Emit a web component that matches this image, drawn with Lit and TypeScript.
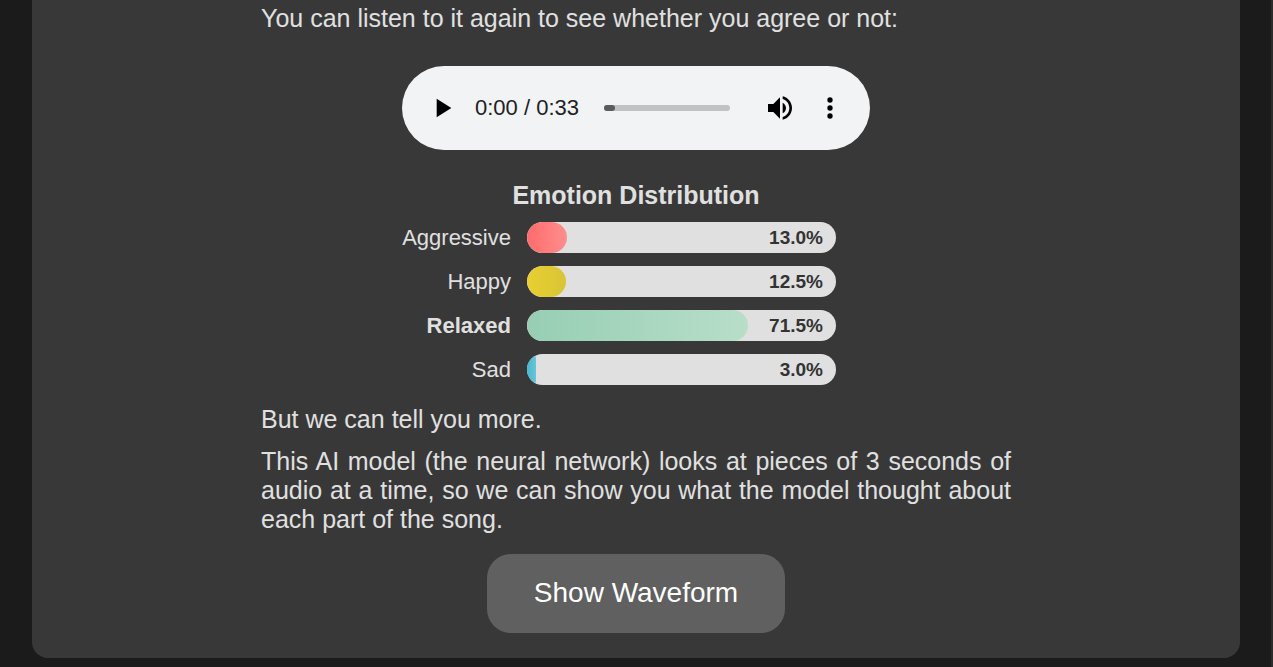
import { LitElement, html, css } from "lit";
import { customElement, property, state } from "lit/decorators.js";
import { classMap } from "lit/directives/class-map.js";
import { styleMap } from "lit/directives/style-map.js";

interface Emotion {
  name: string;
  value: number;
  from: string;
  to: string;
}

@customElement("audio-player")
class AudioPlayer extends LitElement {
  static styles = css`
    :host {
      display: block;
    }
    .player {
      display: flex;
      align-items: center;
      box-sizing: border-box;
      width: 468px;
      max-width: 100%;
      height: 84px;
      padding: 0 15px;
      border-radius: 42px;
      background: #f1f3f4;
      color: #202124;
    }
    .icon {
      display: grid;
      place-items: center;
      flex: none;
      width: 50px;
      height: 50px;
      padding: 0;
      border: 0;
      background: none;
      color: #000;
    }
    .icon svg {
      display: block;
      width: 32px;
      height: 32px;
      fill: currentColor;
    }
    .time {
      flex: none;
      margin-left: 8px;
      font-size: 22px;
      line-height: 28px;
      white-space: nowrap;
    }
    .seek {
      appearance: none;
      flex: 1;
      min-width: 0;
      height: 6px;
      margin: 0 25px;
      border-radius: 3px;
      background: #c1c2c3;
    }
    .seek::-webkit-slider-thumb {
      appearance: none;
      width: 11px;
      height: 6px;
      border-radius: 3px;
      background: #5a5b5c;
    }
  `;

  render() {
    return html`
      <div class="player" role="group" aria-label="Audio player">
        <button class="icon" aria-label="Play">
          <svg viewBox="0 0 24 24"><path d="M8 5v14l11-7z" /></svg>
        </button>
        <span class="time">0:00 / 0:33</span>
        <input class="seek" type="range" min="0" max="33" value="0" aria-label="Seek" />
        <button class="icon" aria-label="Mute">
          <svg viewBox="0 0 24 24">
            <path
              d="M3 9v6h4l5 5V4L7 9H3zm13.5 3c0-1.77-1.02-3.29-2.5-4.03v8.05c1.48-.73 2.5-2.25 2.5-4.02zM14 3.23v2.06c2.89.86 5 3.54 5 6.71s-2.11 5.85-5 6.71v2.06c4.01-.91 7-4.49 7-8.77s-2.99-7.86-7-8.77z"
            />
          </svg>
        </button>
        <button class="icon" aria-label="More options">
          <svg viewBox="0 0 24 24">
            <circle cx="12" cy="6" r="2" />
            <circle cx="12" cy="12" r="2" />
            <circle cx="12" cy="18" r="2" />
          </svg>
        </button>
      </div>
    `;
  }
}

@customElement("emotion-chart")
class EmotionChart extends LitElement {
  static styles = css`
    :host {
      display: block;
    }
    .title {
      margin: 0 0 12px;
      font-size: 25px;
      line-height: 29px;
      font-weight: 700;
      text-align: center;
    }
    .rows {
      display: grid;
      gap: 13px;
      margin: 0;
      padding: 0;
      list-style: none;
    }
    .row {
      display: grid;
      grid-template-columns: 109px 309px;
      column-gap: 16px;
      align-items: center;
      justify-content: center;
      padding-right: 34px;
    }
    .label {
      font-size: 22px;
      line-height: 30px;
      text-align: right;
    }
    .top .label {
      font-weight: 700;
    }
    .track {
      display: grid;
      align-items: center;
      height: 31px;
      border-radius: 16px;
      background: #e0e0e0;
      overflow: hidden;
    }
    .fill,
    .value {
      grid-area: 1 / 1;
    }
    .fill {
      height: 100%;
      border-radius: 16px;
    }
    .value {
      padding-right: 13px;
      color: #333;
      font-size: 19px;
      line-height: 30px;
      font-weight: 700;
      text-align: right;
    }
  `;

  @property({ attribute: false }) emotions: Emotion[] = [];

  render() {
    const highest = Math.max(...this.emotions.map((e) => e.value));
    return html`
      <h3 class="title">Emotion Distribution</h3>
      <ul class="rows">
        ${this.emotions.map(
          (e) => html`
            <li class=${classMap({ row: true, top: e.value === highest })}>
              <span class="label">${e.name}</span>
              <div class="track">
                <div
                  class="fill"
                  style=${styleMap({
                    width: `${e.value}%`,
                    background: `linear-gradient(90deg, ${e.from}, ${e.to})`,
                  })}
                ></div>
                <span class="value">${e.value.toFixed(1)}%</span>
              </div>
            </li>
          `
        )}
      </ul>
    `;
  }
}

@customElement("app-root")
class AppRoot extends LitElement {
  static styles = css`
    :host {
      display: block;
      box-sizing: border-box;
      min-height: 100vh;
      padding: 0 31px 9px 32px;
      border-right: 2px solid #2c2c2c;
      background: #1b1b1b;
      color: #e0e0e0;
      font-family: "Liberation Sans", Arial, sans-serif;
    }
    .card {
      display: flex;
      flex-direction: column;
      align-items: center;
      padding: 4px 32px 25px;
      border-radius: 0 0 16px 16px;
      background: #383838;
    }
    .content {
      display: flex;
      flex-direction: column;
      width: 100%;
      max-width: 750px;
    }
    .text {
      margin: 0 0 13px;
      font-size: 25px;
      line-height: 29px;
      text-align: justify;
    }
    audio-player {
      align-self: center;
      margin: 20px 0 31px;
    }
    emotion-chart {
      margin-bottom: 20px;
    }
    .action {
      align-self: center;
      margin-top: 7px;
      padding: 22px 47px 24px;
      border: 0;
      border-radius: 24px;
      background: #606060;
      color: #fff;
      font-family: inherit;
      font-size: 28px;
      line-height: 33px;
    }
  `;

  @state() private emotions: Emotion[] = [
    { name: "Aggressive", value: 13, from: "#ff6b6b", to: "#ff8e8e" },
    { name: "Happy", value: 12.5, from: "#e8d030", to: "#d9c437" },
    { name: "Relaxed", value: 71.5, from: "#96ceb4", to: "#b8dec8" },
    { name: "Sad", value: 3, from: "#45b7d1", to: "#6bc5d8" },
  ];

  render() {
    return html`
      <main class="card">
        <div class="content">
          <p class="text">You can listen to it again to see whether you agree or not:</p>
          <audio-player></audio-player>
          <emotion-chart .emotions=${this.emotions}></emotion-chart>
          <p class="text">But we can tell you more.</p>
          <p class="text">
            This AI model (the neural network) looks at pieces of 3 seconds of audio at a time, so we
            can show you what the model thought about each part of the song.
          </p>
          <button class="action">Show Waveform</button>
        </div>
      </main>
    `;
  }
}
